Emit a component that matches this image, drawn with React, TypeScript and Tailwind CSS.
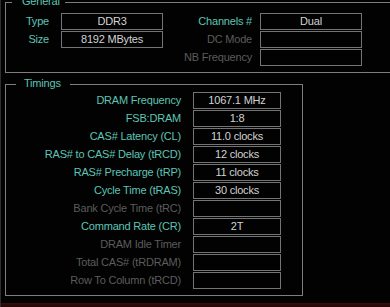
const font = { fontFamily: '"Liberation Sans", Arial, sans-serif' };

type Row = { label: string; value?: string; on: boolean };

const timings: Row[] = [
  { label: "DRAM Frequency", value: "1067.1 MHz", on: true },
  { label: "FSB:DRAM", value: "1:8", on: true },
  { label: "CAS# Latency (CL)", value: "11.0 clocks", on: true },
  { label: "RAS# to CAS# Delay (tRCD)", value: "12 clocks", on: true },
  { label: "RAS# Precharge (tRP)", value: "11 clocks", on: true },
  { label: "Cycle Time (tRAS)", value: "30 clocks", on: true },
  { label: "Bank Cycle Time (tRC)", on: false },
  { label: "Command Rate (CR)", value: "2T", on: true },
  { label: "DRAM Idle Timer", on: false },
  { label: "Total CAS# (tRDRAM)", on: false },
  { label: "Row To Column (tRCD)", on: false },
];

function Label({ text, on, w }: { text: string; on: boolean; w: string }) {
  return (
    <span className={`${w} shrink-0 text-right whitespace-nowrap ${on ? "text-[#5ec4b5]" : "text-[#5c5c5c]"}`}>
      {text}
    </span>
  );
}

function Box({ value, w }: { value?: string; w: string }) {
  return (
    <div className={`${w} h-[17px] shrink-0 border border-[#747474] flex items-center justify-center text-[#d2d2d2] leading-none`}>
      {value}
    </div>
  );
}

export default function App() {
  return (
    <div
      className="w-[390px] h-[307px] bg-[#020202] overflow-hidden flex flex-col text-[11px] tracking-[-0.2px] border-l border-[#2e2e2e]"
      style={font}
    >
      {/* General */}
      <section className="relative mt-[2px] ml-[4px] h-[71px] w-[400px] shrink-0 border border-[#7e7e7e]">
        <span className="absolute left-[6px] -top-[9px] bg-[#020202] pl-[10px] pr-[5px] leading-[14px] text-[#5ec4b5]">
          General
        </span>
        <div className="flex pt-[10px]">
          <div className="flex flex-col gap-[1px]">
            <div className="flex items-center gap-[12px]">
              <Label text="Type" on w="w-[43px]" />
              <Box value="DDR3" w="w-[102px]" />
            </div>
            <div className="flex items-center gap-[12px]">
              <Label text="Size" on w="w-[43px]" />
              <Box value="8192 MBytes" w="w-[102px]" />
            </div>
          </div>
          <div className="flex flex-col gap-[1px]">
            <div className="flex items-center gap-[8px]">
              <Label text="Channels #" on w="w-[89px]" />
              <Box value="Dual" w="w-[102px]" />
            </div>
            <div className="flex items-center gap-[8px]">
              <Label text="DC Mode" on={false} w="w-[89px]" />
              <Box w="w-[102px]" />
            </div>
            <div className="flex items-center gap-[8px]">
              <Label text="NB Frequency" on={false} w="w-[89px]" />
              <Box w="w-[102px]" />
            </div>
          </div>
        </div>
      </section>

      {/* Timings */}
      <section className="relative mt-[11px] ml-[4px] h-[212px] w-[298px] shrink-0 border border-[#7e7e7e]">
        <span className="absolute left-[10px] -top-[9px] bg-[#020202] pl-[8px] pr-[9px] leading-[14px] text-[#5ec4b5]">
          Timings
        </span>
        <div className="flex flex-col gap-[1px] pt-[7px]">
          {timings.map((r) => (
            <div key={r.label} className="flex items-center gap-[12px]">
              <Label text={r.label} on={r.on} w="w-[175px]" />
              <Box value={r.value} w="w-[88px]" />
            </div>
          ))}
        </div>
      </section>

      <div className="flex-1" />
      <div className="h-[4px] bg-gradient-to-b from-[#3a0c0c] to-[#260606]" />
    </div>
  );
}
